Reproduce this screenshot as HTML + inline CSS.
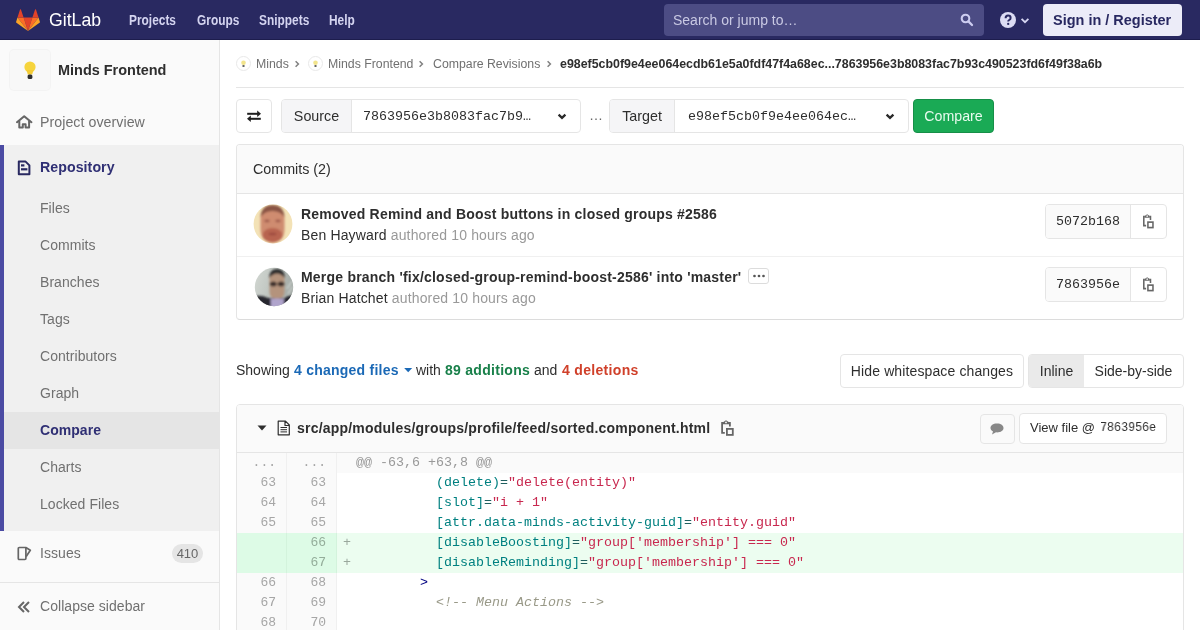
<!DOCTYPE html>
<html><head><meta charset="utf-8">
<style>
*{box-sizing:border-box;margin:0;padding:0}
html,body{width:1200px;height:630px;overflow:hidden;background:#fff}
body>*{will-change:transform}
body{font-family:"Liberation Sans",sans-serif;font-size:14px;color:#2e2e2e;position:relative}
.a{position:absolute;white-space:nowrap}
.mono{font-family:"Liberation Mono",monospace}
.sx{transform-origin:0 50%}
#hdr{position:absolute;left:0;top:0;width:1200px;height:40px;background:#292961;border-bottom:1px solid #1d1d4d}
.nav{position:absolute;top:0;height:40px;line-height:40px;color:#d4d4f0;font-weight:bold;font-size:14px;transform-origin:0 50%;transform:scaleX(0.85)}
#side{position:absolute;left:0;top:40px;width:220px;height:590px;background:#fafafa;border-right:1px solid #e5e5e5}
.si{position:absolute;left:40px;color:#707070;font-size:14px;white-space:nowrap;letter-spacing:0.05px}
.crumb{color:#707070;font-size:12.3px}
.box{position:absolute;border:1px solid #e5e5e5;border-radius:4px}
.ln{position:absolute;width:49px;text-align:right;color:#a6a6a6;font-family:"Liberation Mono",monospace;font-size:13px;line-height:20px}
.cl{position:absolute;left:340px;font-family:"Liberation Mono",monospace;font-size:13.33px;line-height:20px;white-space:pre;color:#2e2e2e}
.na{color:#008080}.s{color:#c8284f}.o{color:#1f5f5f}.nt{color:#000080}.c{color:#999988;font-style:italic}
.bt{font-weight:bold;letter-spacing:0.21px}
</style></head><body>

<div id="hdr">
  <svg class="a" style="left:16px;top:9px" width="24" height="22" viewBox="0 0 25 23">
    <path d="M12.5 23 L17.1 9 H7.9 Z" fill="#e24329"/>
    <path d="M12.5 23 L7.9 9 H1.5 Z" fill="#fc6d26"/>
    <path d="M1.5 9 L0.1 13.3 a1 1 0 0 0 .35 1.1 L12.5 23 Z" fill="#fca326"/>
    <path d="M1.5 9 H7.9 L5.1 0.6 a.5.5 0 0 0 -.9 0 Z" fill="#e24329"/>
    <path d="M12.5 23 L17.1 9 H23.5 Z" fill="#fc6d26"/>
    <path d="M23.5 9 L24.9 13.3 a1 1 0 0 1 -.35 1.1 L12.5 23 Z" fill="#fca326"/>
    <path d="M23.5 9 H17.1 L19.9 0.6 a.5.5 0 0 1 .9 0 Z" fill="#e24329"/>
  </svg>
  <div class="a sx" style="left:49px;top:0;line-height:39px;color:#fff;font-size:19px;transform:scaleX(0.93)">GitLab</div>
  <div class="nav" style="left:129px">Projects</div>
  <div class="nav" style="left:197px">Groups</div>
  <div class="nav" style="left:259px">Snippets</div>
  <div class="nav" style="left:329px">Help</div>
  <div class="a" style="left:664px;top:4px;width:320px;height:32px;background:#4c4c84;border-radius:4px;color:#c9c9e3;font-size:14px;line-height:32px;padding-left:9px">Search or jump to…</div>
  <svg class="a" style="left:960px;top:13px" width="14" height="14" viewBox="0 0 14 14"><circle cx="5.5" cy="5.5" r="3.8" fill="none" stroke="#cdcdf0" stroke-width="2.1"/><path d="M8.4 8.4 L12 12" stroke="#cdcdf0" stroke-width="2.3" stroke-linecap="round"/></svg>
  <svg class="a" style="left:1000px;top:12px" width="16" height="16" viewBox="0 0 16 16"><circle cx="8" cy="8" r="8" fill="#dcdcf4"/><path d="M5.6 6.2 Q5.6 3.6 8.1 3.6 Q10.6 3.6 10.6 5.9 Q10.6 7.2 9.2 8 Q8.2 8.6 8.2 9.6" fill="none" stroke="#292961" stroke-width="2"/><circle cx="8.2" cy="11.9" r="1.15" fill="#292961"/></svg>
  <svg class="a" style="left:1020px;top:17px" width="10" height="8" viewBox="0 0 10 8"><path d="M1.6 1.8 L5 5.2 L8.4 1.8" fill="none" stroke="#d6d6f2" stroke-width="1.8"/></svg>
  <div class="a" style="left:1043px;top:4px;width:139px;height:32px;background:#ececf8;border-radius:4px"></div>
  <div class="a sx" style="left:1053px;top:4px;line-height:32px;color:#292961;font-weight:bold;font-size:15px;transform:scaleX(0.965)">Sign in / Register</div>
</div>

<div id="side">
  <div class="a" style="left:10px;top:10px;width:40px;height:40px;background:#f8f8f8;border-radius:4px;box-shadow:0 0 0 1px #f3f3f3"></div>
  <svg class="a" style="left:23px;top:20px" width="14" height="21" viewBox="0 0 14 21"><defs><filter id="bb" x="-30%" y="-30%" width="160%" height="160%"><feGaussianBlur stdDeviation="0.5"/></filter></defs><g filter="url(#bb)"><ellipse cx="7" cy="7" rx="5.6" ry="5.6" fill="#f6d43c"/><path d="M3.5 10 L4.8 14.5 H9.2 L10.5 10Z" fill="#f3cb35"/><rect x="4.6" y="14.5" width="4.8" height="4.6" rx="1.6" fill="#2e2e2e"/></g></svg>
  <div class="a sx" style="left:58px;top:21px;font-weight:bold;font-size:15px;color:#2e2e2e;transform:scaleX(0.964)">Minds Frontend</div>
  <svg class="a" style="left:16px;top:75px" width="17" height="14" viewBox="0 0 17 14"><path d="M1 7.2 L8.2 1.3 L15.4 7.2" fill="none" stroke="#666" stroke-width="2.1" stroke-linejoin="round" stroke-linecap="round"/><path d="M3.3 6 V12.6 H6.8 V9.2 H9.6 V12.6 H13.1 V6" fill="none" stroke="#666" stroke-width="2" stroke-linejoin="round"/></svg>
  <div class="si" style="top:74px;font-size:14.2px">Project overview</div>
  <div class="a" style="left:0;top:105px;width:219px;height:386px;background:#f0f0f0"></div>
  <div class="a" style="left:0;top:105px;width:4px;height:386px;background:#4b4ba3"></div>
  <svg class="a" style="left:17px;top:120px" width="14" height="16" viewBox="0 0 14 16"><path d="M1.8 1.6 H8.6 L12.4 5.4 V14.2 H1.8 Z" fill="none" stroke="#292961" stroke-width="2" stroke-linejoin="round"/><rect x="4" y="4.3" width="3.4" height="2.2" fill="#292961"/><rect x="4" y="8.2" width="6.4" height="2.2" fill="#292961"/></svg>
  <div class="si" style="top:119px;color:#2f2f74;font-weight:bold;font-size:14.2px">Repository</div>
  <div class="si" style="top:160px">Files</div>
  <div class="si" style="top:197px">Commits</div>
  <div class="si" style="top:234px">Branches</div>
  <div class="si" style="top:271px">Tags</div>
  <div class="si" style="top:308px">Contributors</div>
  <div class="si" style="top:345px">Graph</div>
  <div class="a" style="left:4px;top:372px;width:215px;height:37px;background:#e5e5e5"></div>
  <div class="si" style="top:382px;color:#2f2f74;font-weight:bold">Compare</div>
  <div class="si" style="top:419px">Charts</div>
  <div class="si" style="top:456px">Locked Files</div>
  <svg class="a" style="left:16px;top:505px" width="17" height="17" viewBox="0 0 17 17"><path d="M2.3 3.5 Q2.3 2.5 3.3 2.5 H9.9 V13.3 Q9.9 14.5 8.9 14.5 H3.3 Q2.3 14.5 2.3 13.5 Z" fill="none" stroke="#666" stroke-width="1.7" stroke-linejoin="round"/><path d="M9.9 2.5 L14.3 5.2 L10.2 11.5" fill="none" stroke="#666" stroke-width="1.7" stroke-linejoin="round"/></svg>
  <div class="si" style="top:505px">Issues</div>
  <div class="a" style="left:172px;top:504px;width:31px;height:19px;border-radius:10px;background:#e5e5e5;color:#666;font-size:13px;line-height:19px;text-align:center">410</div>
  <div class="a" style="left:0;top:542px;width:219px;height:1px;background:#e5e5e5"></div>
  <svg class="a" style="left:16px;top:559px" width="16" height="16" viewBox="0 0 16 16"><path d="M8 3 L3 8 L8 13 M13 3 L8 8 L13 13" fill="none" stroke="#666" stroke-width="2"/></svg>
  <div class="si" style="top:558px">Collapse sidebar</div>
</div>

<!-- breadcrumbs -->
<svg class="a" style="left:236px;top:56px" width="16" height="16" viewBox="0 0 16 16"><circle cx="7.5" cy="7.5" r="7" fill="#fff" stroke="#e8e8e8"/><circle cx="7.5" cy="6.8" r="2.3" fill="#f2e48c"/><rect x="6.5" y="9" width="2" height="2" fill="#666"/></svg>
<div class="a crumb" style="left:255.5px;top:57px">Minds</div>
<svg class="a" style="left:294px;top:60px" width="7" height="8" viewBox="0 0 7 8"><path d="M1.6 1.3 L4.4 4 L1.6 6.7" fill="none" stroke="#808080" stroke-width="1.5"/></svg>
<svg class="a" style="left:308px;top:56px" width="16" height="16" viewBox="0 0 16 16"><circle cx="7.5" cy="7.5" r="7" fill="#fff" stroke="#e8e8e8"/><circle cx="7.5" cy="6.8" r="2.3" fill="#f2e48c"/><rect x="6.5" y="9" width="2" height="2" fill="#666"/></svg>
<div class="a crumb" style="left:327.5px;top:57px">Minds Frontend</div>
<svg class="a" style="left:418px;top:60px" width="7" height="8" viewBox="0 0 7 8"><path d="M1.6 1.3 L4.4 4 L1.6 6.7" fill="none" stroke="#808080" stroke-width="1.5"/></svg>
<div class="a crumb" style="left:432.5px;top:57px">Compare Revisions</div>
<svg class="a" style="left:546px;top:60px" width="7" height="8" viewBox="0 0 7 8"><path d="M1.6 1.3 L4.4 4 L1.6 6.7" fill="none" stroke="#808080" stroke-width="1.5"/></svg>
<div class="a crumb" style="left:560px;top:57px;color:#2e2e2e;font-weight:bold;font-size:12.4px">e98ef5cb0f9e4ee064ecdb61e5a0fdf47f4a68ec...7863956e3b8083fac7b93c490523fd6f49f38a6b</div>
<div class="a" style="left:236px;top:87px;width:948px;height:1px;background:#e5e5e5"></div>

<!-- compare form -->
<div class="box" style="left:236px;top:99px;width:36px;height:34px;background:#fff"></div>
<svg class="a" style="left:246px;top:108px" width="16" height="16" viewBox="0 0 16 16"><rect x="1.2" y="4.8" width="11" height="2" fill="#1f1f1f"/><path d="M11.2 2.6 L15 5.8 L11.2 9Z" fill="#1f1f1f"/><rect x="3.8" y="9.8" width="11" height="2" fill="#1f1f1f"/><path d="M4.8 7.6 L1 10.8 L4.8 14Z" fill="#1f1f1f"/></svg>
<div class="box" style="left:281px;top:99px;width:300px;height:34px;background:#fff"></div>
<div class="a" style="left:282px;top:100px;width:70px;height:32px;background:#f5f5f7;border-right:1px solid #e5e5e5;border-radius:3px 0 0 3px;line-height:33px;text-align:center;color:#2e2e2e;font-size:14.3px">Source</div>
<div class="a mono" style="left:363px;top:101px;line-height:32px;font-size:13.33px;color:#2e2e2e">7863956e3b8083fac7b9…</div>
<svg class="a" style="left:556px;top:111px" width="12" height="10" viewBox="0 0 12 10"><path d="M2.6 3.6 L6 6.9 L9.4 3.6" fill="none" stroke="#2a2a2a" stroke-width="2.3"/></svg>
<div class="a" style="left:589px;top:99px;line-height:32px;color:#666;font-size:14px">…</div>
<div class="box" style="left:609px;top:99px;width:300px;height:34px;background:#fff"></div>
<div class="a" style="left:610px;top:100px;width:65px;height:32px;background:#f5f5f7;border-right:1px solid #e5e5e5;border-radius:3px 0 0 3px;line-height:33px;text-align:center;color:#2e2e2e;font-size:14.3px">Target</div>
<div class="a mono" style="left:688px;top:101px;line-height:32px;font-size:13.33px;color:#2e2e2e">e98ef5cb0f9e4ee064ec…</div>
<svg class="a" style="left:884px;top:111px" width="12" height="10" viewBox="0 0 12 10"><path d="M2.6 3.6 L6 6.9 L9.4 3.6" fill="none" stroke="#2a2a2a" stroke-width="2.3"/></svg>
<div class="a" style="left:913px;top:99px;width:81px;height:34px;background:#1aaa55;border:1px solid #168f48;border-radius:4px;color:#e8fbef;line-height:32px;text-align:center;font-size:14.2px">Compare</div>

<!-- commits -->
<div class="box" style="left:236px;top:144px;width:948px;height:176px;border-bottom-color:#dcdcdc"></div>
<div class="a" style="left:237px;top:145px;width:946px;height:49px;background:#fafafa;border-bottom:1px solid #e5e5e5;border-radius:3px 3px 0 0"></div>
<div class="a" style="left:253px;top:161px;font-size:14.3px">Commits (2)</div>
<div class="a" style="left:237px;top:256px;width:946px;height:1px;background:#f0f0f0"></div>

<svg class="a" style="left:253px;top:204px" width="40" height="40" viewBox="0 0 40 40">
  <defs><clipPath id="c1"><circle cx="20" cy="20" r="19.4"/></clipPath><filter id="b1" x="-20%" y="-20%" width="140%" height="140%"><feGaussianBlur stdDeviation="1.1"/></filter></defs>
  <g clip-path="url(#c1)"><rect width="40" height="40" fill="#f3e2b6"/><g filter="url(#b1)"><path d="M7.5 15 Q7.5 2.5 19.5 2.5 Q31.5 2.5 31.5 15 V25 Q31.5 37.5 19.5 39 Q7.5 37.5 7.5 25Z" fill="#cf8c70"/><path d="M7.5 13 Q8.5 1 19.5 1 Q30.5 1 31.5 13 Q27 7 19.5 7 Q12 7 7.5 13Z" fill="#8a5444"/><ellipse cx="19.5" cy="31" rx="10" ry="7" fill="#b8644f"/><ellipse cx="14" cy="17" rx="2.8" ry="1.4" fill="#a35f50"/><ellipse cx="25" cy="17" rx="2.8" ry="1.4" fill="#a35f50"/><ellipse cx="19.5" cy="30" rx="4" ry="1.2" fill="#9c4a3e"/></g></g>
</svg>
<div class="a bt" style="left:301px;top:206px">Removed Remind and Boost buttons in closed groups #2586</div>
<div class="a" style="left:301px;top:227px;letter-spacing:0.15px">Ben Hayward <span style="color:#999">authored 10 hours ago</span></div>
<div class="a" style="left:1045px;top:204px;width:122px;height:35px;border:1px solid #e5e5e5;border-radius:4px;background:#fff"></div>
<div class="a mono" style="left:1046px;top:205px;width:85px;height:33px;background:#fafafa;border-right:1px solid #e5e5e5;border-radius:3px 0 0 3px;line-height:33px;text-align:center;font-size:13.33px">5072b168</div>
<svg class="a" style="left:1142px;top:214px" width="12" height="14.6" preserveAspectRatio="none" viewBox="0 0 14 16"><path d="M3.3 2.9 H2.1 V12.8 H4.8 M8.7 2.9 H9.9 V6.5" fill="none" stroke="#666" stroke-width="1.8"/><path d="M3 4.2 V2.2 L6 0.3 L9 2.2 V4.2Z" fill="#666"/><circle cx="6" cy="2.4" r="0.9" fill="#fff"/><rect x="6.9" y="8.9" width="5.9" height="6" fill="none" stroke="#666" stroke-width="1.8"/></svg>

<svg class="a" style="left:254px;top:267px" width="40" height="40" viewBox="0 0 40 40">
  <defs><clipPath id="c2"><circle cx="20" cy="20" r="19.2"/></clipPath><filter id="b2" x="-20%" y="-20%" width="140%" height="140%"><feGaussianBlur stdDeviation="0.9"/></filter><linearGradient id="g2" x1="0" y1="0" x2="1" y2="0.3"><stop offset="0" stop-color="#d4d9d4"/><stop offset="0.45" stop-color="#c2c8c3"/><stop offset="1" stop-color="#a3aaa6"/></linearGradient></defs>
  <g clip-path="url(#c2)"><rect width="40" height="40" fill="url(#g2)"/><g filter="url(#b2)"><path d="M-2 30 Q6 27 14 31 L31 31 Q36 27 42 29 V42 H-2Z" fill="#26262e"/><path d="M15.5 10 Q15.5 4 23 4 Q30.5 4 30.5 10 V24 Q30.5 32 23 32 Q15.5 32 15.5 24Z" fill="#b4937c"/><path d="M15 11 Q15.5 2 23 2 Q30.5 2 31 11 Q27 6.5 23 6.5 Q19 6.5 15 11Z" fill="#2e2e2e"/><ellipse cx="19.3" cy="17" rx="3.4" ry="2.5" fill="#3a2e2a"/><ellipse cx="27" cy="17" rx="3.4" ry="2.5" fill="#3a2e2a"/><path d="M16.5 31.5 H30 L29.5 42 H17Z" fill="#b0a4cc"/><path d="M33 22 L38 14 M34 27 L39 19" stroke="#e8ece8" stroke-width="1"/></g></g>
</svg>
<div class="a bt" style="left:301px;top:269px">Merge branch 'fix/closed-group-remind-boost-2586' into 'master'</div>
<div class="a" style="left:748px;top:268px;width:21px;height:16px;border:1px solid #dcdcdc;border-radius:3px;background:#fff"></div>
<svg class="a" style="left:752px;top:274px" width="14" height="4" viewBox="0 0 14 4"><circle cx="2.5" cy="2" r="1.35" fill="#555"/><circle cx="7" cy="2" r="1.35" fill="#555"/><circle cx="11.5" cy="2" r="1.35" fill="#555"/></svg>
<div class="a" style="left:301px;top:290px;letter-spacing:0.15px">Brian Hatchet <span style="color:#999">authored 10 hours ago</span></div>
<div class="a" style="left:1045px;top:267px;width:122px;height:35px;border:1px solid #e5e5e5;border-radius:4px;background:#fff"></div>
<div class="a mono" style="left:1046px;top:268px;width:85px;height:33px;background:#fafafa;border-right:1px solid #e5e5e5;border-radius:3px 0 0 3px;line-height:33px;text-align:center;font-size:13.33px">7863956e</div>
<svg class="a" style="left:1142px;top:277px" width="12" height="14.6" preserveAspectRatio="none" viewBox="0 0 14 16"><path d="M3.3 2.9 H2.1 V12.8 H4.8 M8.7 2.9 H9.9 V6.5" fill="none" stroke="#666" stroke-width="1.8"/><path d="M3 4.2 V2.2 L6 0.3 L9 2.2 V4.2Z" fill="#666"/><circle cx="6" cy="2.4" r="0.9" fill="#fff"/><rect x="6.9" y="8.9" width="5.9" height="6" fill="none" stroke="#666" stroke-width="1.8"/></svg>

<!-- showing -->
<div class="a" style="left:235.7px;top:362px">Showing</div>
<div class="a" style="left:293.9px;top:362px;font-weight:bold;color:#1b69b6;letter-spacing:0.24px">4 changed files</div>
<svg class="a" style="left:404px;top:367px" width="9" height="6" viewBox="0 0 9 6"><path d="M0.2 1 H8.2 L4.2 5.2Z" fill="#1b69b6"/></svg>
<div class="a" style="left:416.3px;top:362px">with</div>
<div class="a" style="left:444.9px;top:362px;font-weight:bold;color:#19804a;letter-spacing:0.28px">89 additions</div>
<div class="a" style="left:534.1px;top:362px">and</div>
<div class="a" style="left:561.8px;top:362px;font-weight:bold;color:#d0402a;letter-spacing:0.32px">4 deletions</div>
<div class="a" style="left:840px;top:354px;width:184px;height:34px;border:1px solid #e5e5e5;border-radius:4px;background:#fff;line-height:33px;text-align:center;font-size:14px;letter-spacing:0.12px">Hide whitespace changes</div>
<div class="a" style="left:1028px;top:354px;width:156px;height:34px;border:1px solid #e5e5e5;border-radius:4px;background:#fff"></div>
<div class="a" style="left:1029px;top:355px;width:55px;height:32px;background:#eaeaea;border-radius:3px 0 0 3px;line-height:33px;text-align:center;font-size:14px">Inline</div>
<div class="a" style="left:1084px;top:355px;width:99px;height:32px;line-height:33px;text-align:center;font-size:14px">Side-by-side</div>

<!-- file -->
<div class="box" style="left:236px;top:404px;width:948px;height:240px;border-radius:4px 4px 0 0"></div>
<div class="a" style="left:237px;top:405px;width:946px;height:48px;background:#fafafa;border-bottom:1px solid #e5e5e5;border-radius:3px 3px 0 0"></div>
<svg class="a" style="left:257px;top:425px" width="10" height="6" viewBox="0 0 10 6"><path d="M0.5 0.5 H9.5 L5 5.5Z" fill="#2e2e2e"/></svg>
<svg class="a" style="left:277px;top:420px" width="14" height="16" viewBox="0 0 14 16"><path d="M1.2 1.2 H8.5 L12.3 5 V14.8 H1.2 Z M8 1.5 V5.5 H12" fill="none" stroke="#2e2e2e" stroke-width="1.2" stroke-linejoin="round"/><path d="M3.5 7.5 H10 M3.5 9.7 H10 M3.5 11.9 H10" stroke="#2e2e2e" stroke-width="1"/></svg>
<div class="a bt" style="left:297px;top:420px">src/app/modules/groups/profile/feed/sorted.component.html</div>
<svg class="a" style="left:720px;top:420px" width="14" height="16" viewBox="0 0 14 16"><path d="M3.3 2.9 H2.1 V12.8 H4.8 M8.7 2.9 H9.9 V6.5" fill="none" stroke="#666" stroke-width="1.8"/><path d="M3 4.2 V2.2 L6 0.3 L9 2.2 V4.2Z" fill="#666"/><circle cx="6" cy="2.4" r="0.9" fill="#fff"/><rect x="6.9" y="8.9" width="5.9" height="6" fill="none" stroke="#666" stroke-width="1.8"/></svg>
<div class="a" style="left:980px;top:414px;width:35px;height:30px;border:1px solid #e5e5e5;border-radius:4px;background:#fafafa"></div>
<svg class="a" style="left:989px;top:422px" width="16" height="14" viewBox="0 0 16 14"><path d="M8 1.5 C4 1.5 1.5 3.5 1.5 6 C1.5 7.5 2.5 8.8 4 9.5 L3 12.5 L7 10.3 C7.3 10.3 7.7 10.4 8 10.4 C12 10.4 14.5 8.4 14.5 6 C14.5 3.5 12 1.5 8 1.5Z" fill="#888"/></svg>
<div class="a" style="left:1019px;top:413px;width:148px;height:31px;border:1px solid #e5e5e5;border-radius:4px;background:#fff"></div>
<div class="a" style="left:1030px;top:413px;line-height:30px;font-size:13px">View file @</div><div class="a mono sx" style="left:1100px;top:413px;line-height:30px;font-size:13px;transform:scaleX(0.9)">7863956e</div>

<!-- diff -->
<div class="a" style="left:237px;top:453px;width:50px;height:177px;background:#fafafa;border-right:1px solid #f0f0f0"></div>
<div class="a" style="left:287px;top:453px;width:50px;height:177px;background:#fafafa;border-right:1px solid #f0f0f0"></div>
<div class="a" style="left:337px;top:453px;width:846px;height:20px;background:#fafafa"></div>
<div class="a" style="left:237px;top:533px;width:946px;height:40px;background:#ecfdf0"></div>
<div class="a" style="left:237px;top:533px;width:100px;height:40px;background:#ddfbe6"></div>
<div class="a" style="left:286px;top:533px;width:1px;height:40px;background:#d3f3dc"></div>
<div class="a" style="left:336px;top:533px;width:1px;height:40px;background:#d3f3dc"></div>

<div class="ln" style="left:227px;top:453px">...</div><div class="ln" style="left:277px;top:453px">...</div>
<div class="ln" style="left:227px;top:473px">63</div><div class="ln" style="left:277px;top:473px">63</div>
<div class="ln" style="left:227px;top:493px">64</div><div class="ln" style="left:277px;top:493px">64</div>
<div class="ln" style="left:227px;top:513px">65</div><div class="ln" style="left:277px;top:513px">65</div>
<div class="ln" style="left:277px;top:533px;color:#94ad9a">66</div>
<div class="ln" style="left:277px;top:553px;color:#94ad9a">67</div>
<div class="ln" style="left:227px;top:573px">66</div><div class="ln" style="left:277px;top:573px">68</div>
<div class="ln" style="left:227px;top:593px">67</div><div class="ln" style="left:277px;top:593px">69</div>
<div class="ln" style="left:227px;top:613px">68</div><div class="ln" style="left:277px;top:613px">70</div>

<div class="cl" style="left:356px;top:453px;color:#999">@@ -63,6 +63,8 @@</div>
<div class="cl" style="top:473px">            <span class="na">(delete)</span><span class="o">=</span><span class="s">"delete(entity)"</span></div>
<div class="cl" style="top:493px">            <span class="na">[slot]</span><span class="o">=</span><span class="s">"i + 1"</span></div>
<div class="cl" style="top:513px">            <span class="na">[attr.data-minds-activity-guid]</span><span class="o">=</span><span class="s">"entity.guid"</span></div>
<div class="cl" style="left:343px;top:533px;color:#9aa89d">+</div><div class="cl" style="top:533px">            <span class="na">[disableBoosting]</span><span class="o">=</span><span class="s">"group['membership'] === 0"</span></div>
<div class="cl" style="left:343px;top:553px;color:#9aa89d">+</div><div class="cl" style="top:553px">            <span class="na">[disableReminding]</span><span class="o">=</span><span class="s">"group['membership'] === 0"</span></div>
<div class="cl" style="top:573px">          <span class="nt">&gt;</span></div>
<div class="cl" style="top:593px">            <span class="c">&lt;!-- Menu Actions --&gt;</span></div>

</body></html>
